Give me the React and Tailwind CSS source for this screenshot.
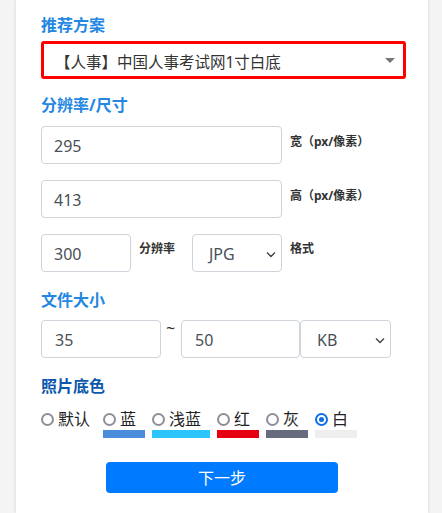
import React from "react";

const swatches = [
  { label: "默认", w: "w-[55px]", color: "" },
  { label: "蓝", w: "w-[42px]", color: "bg-[#4a8edb]" },
  { label: "浅蓝", w: "w-[58px]", color: "bg-[#2ec4fc]" },
  { label: "红", w: "w-[42px]", color: "bg-[#e60012]" },
  { label: "灰", w: "w-[42px]", color: "bg-[#666b7d]" },
  { label: "白", w: "w-[42px]", color: "bg-[#eeeeee]" },
];

const Chevron = () => (
  <svg width="10" height="7" viewBox="0 0 10 7" className="absolute right-[5px] top-[16px]">
    <path d="M1 1.5 L5 5.5 L9 1.5" fill="none" stroke="#444" strokeWidth="1.4" />
  </svg>
);

const Field = ({ value, className }) => (
  <div
    className={
      "h-[38px] flex items-center rounded-[4px] border border-[#ced4da] pl-[12px] pt-[2px] text-[16px] text-[#495057] " +
      className
    }
  >
    {value}
  </div>
);

const Select = ({ value, className }) => (
  <div
    className={
      "relative h-[38px] flex items-center rounded-[4px] border border-[#ced4da] pl-[16px] pt-[2px] text-[16px] text-[#495057] " +
      className
    }
  >
    {value}
    <Chevron />
  </div>
);

const Heading = ({ children, dark }) => (
  <h3
    className={
      "text-[16px] leading-[24px] font-bold " +
      (dark ? "text-[#0b58ad]" : "text-[#2487e2]")
    }
  >
    {children}
  </h3>
);

const Radio = ({ checked }) =>
  checked ? (
    <span className="w-[13px] h-[13px] rounded-full border-[2px] border-[#0d6fe6] flex items-center justify-center">
      <span className="w-[5px] h-[5px] rounded-full bg-[#0d6fe6]" />
    </span>
  ) : (
    <span className="w-[13px] h-[13px] rounded-full border-[2px] border-[#8f8e99]" />
  );

export default function App() {
  return (
    <div className="min-h-[513px] bg-[#f4f4f4] font-['Noto_Sans','Noto_Sans_CJK_SC',sans-serif] overflow-hidden">
      <div className="ml-[16px] w-[412px] h-[513px] bg-white shadow-[0_0_3px_rgba(0,0,0,0.15)] pl-[25px] pr-[22px] pt-[13px]">
        <Heading>推荐方案</Heading>
        <div className="relative mt-[4px] h-[38px] border-[3px] border-[#ff0000] rounded-[3px] flex items-center pl-[11px] pt-[6px] text-[15.5px] text-[#333]">
          【人事】中国人事考试网1寸白底
          <span className="absolute right-[8px] top-[14px] w-0 h-0 border-l-[5px] border-r-[5px] border-t-[5px] border-l-transparent border-r-transparent border-t-[#777]" />
        </div>

        <div className="mt-[14px]">
          <Heading>分辨率/尺寸</Heading>
        </div>
        <div className="mt-[9px] flex items-start">
          <Field value="295" className="w-[241px]" />
          <span className="ml-[8px] pt-[8px] text-[12px] leading-[16px] font-bold text-[#333]">宽（px/像素）</span>
        </div>
        <div className="mt-[16px] flex items-start">
          <Field value="413" className="w-[241px]" />
          <span className="ml-[8px] pt-[8px] text-[12px] leading-[16px] font-bold text-[#333]">高（px/像素）</span>
        </div>
        <div className="mt-[16px] flex items-start">
          <Field value="300" className="w-[90px]" />
          <span className="ml-[8px] w-[53px] pt-[7px] text-[12px] leading-[16px] font-bold text-[#333]">分辨率</span>
          <Select value="JPG" className="w-[90px]" />
          <span className="ml-[8px] pt-[7px] text-[12px] leading-[16px] font-bold text-[#333]">格式</span>
        </div>

        <div className="mt-[16px]">
          <Heading>文件大小</Heading>
        </div>
        <div className="mt-[8px] flex items-start">
          <Field value="35" className="w-[120px] pl-[13px]" />
          <span className="w-[20px] pl-[5px] text-[16px] leading-[16px] text-[#333]">~</span>
          <Field value="50" className="w-[119px] pl-[13px]" />
          <Select value="KB" className="w-[91px]" />
        </div>

        <div className="mt-[16px]">
          <Heading dark>照片底色</Heading>
        </div>
        <div className="mt-[10px] flex gap-[7px]">
          {swatches.map((s, i) => (
            <div key={i} className={"flex flex-col " + s.w}>
              <div className="flex items-center h-[22px] gap-[4px] text-[16px] text-[#222]">
                <Radio checked={i === 5} />
                <span>{s.label}</span>
              </div>
              <div className={"h-[8px] " + s.color} />
            </div>
          ))}
        </div>

        <div className="mt-[24px] flex justify-center pr-[3px]">
          <button className="w-[232px] h-[31px] rounded-[4px] bg-[#007bff] text-white text-[16px]">
            下一步
          </button>
        </div>
      </div>
    </div>
  );
}
